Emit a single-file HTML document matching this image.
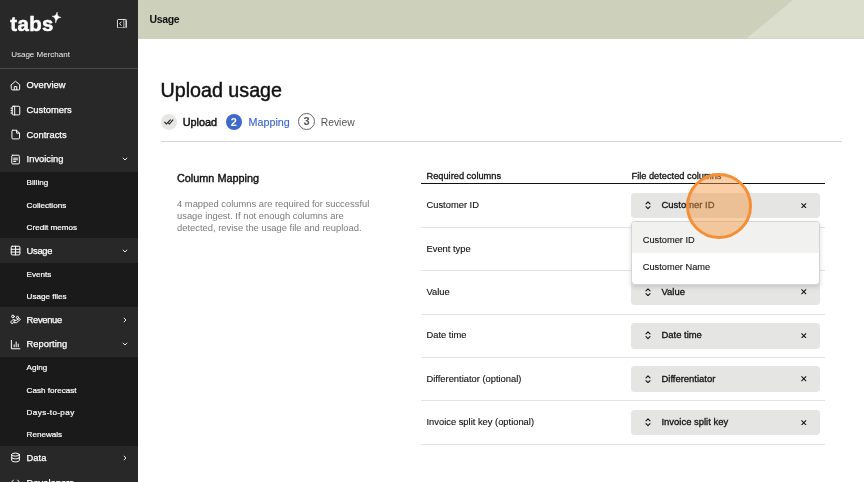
<!DOCTYPE html>
<html lang="en">
<head>
<meta charset="utf-8">
<title>Upload usage</title>
<style>
*{box-sizing:border-box;margin:0;padding:0}
body{will-change:transform}
html,body{width:864px;height:482px;overflow:hidden;background:#fff;font-family:"Liberation Sans",Arial,sans-serif;color:#111}
#side{position:absolute;left:0;top:0;width:138px;height:482px;background:#282828;color:#fff;overflow:hidden}
#logo{position:absolute;left:10.3px;top:11.9px;font-size:20.4px;font-weight:700;letter-spacing:0.35px;line-height:24px;-webkit-text-stroke:0.5px #fff}
#merchant{position:absolute;left:11.2px;top:49px;font-size:8px;line-height:12px;color:#eee}
#sdiv{position:absolute;left:0;top:68px;width:138px;height:1px;background:#4a4a4a}
#nav{position:absolute;left:0;top:73px;width:138px}
.it{height:24.69px;position:relative;background:#282828}
.it span{position:absolute;left:26.6px;top:0.2px;line-height:24.69px;font-size:9.35px;color:#fff;-webkit-text-stroke:0.25px #fff}
.it svg.ic{position:absolute;left:9.9px;top:6.9px;width:11px;height:11px}
.it svg.ch{position:absolute;left:121.5px;top:9.3px;width:6px;height:6px}
.sub{background:#1a1a1a}
.sub em{font-style:normal;position:relative;top:0.7px}
.sub div{height:22.2px;line-height:22.2px;padding-left:26.6px;font-size:8.1px;color:#fff;-webkit-text-stroke:0.2px #fff}
#top{position:absolute;left:138px;top:0;width:726px;height:38.5px;background:#cdd0bb;overflow:hidden}
#top b{position:absolute;left:11.6px;top:0.2px;line-height:38px;letter-spacing:-0.4px;font-size:10.5px;font-weight:700;color:#111}
#main{position:absolute;left:138px;top:38.5px;width:726px;height:444px;background:#fff}
h1{position:absolute;left:160.5px;top:76px;font-size:19.7px;font-weight:400;line-height:28px;color:#111;-webkit-text-stroke:0.45px #111;white-space:nowrap}
.step{position:absolute;top:113.6px;height:16.4px;white-space:nowrap}
.step i{position:absolute;left:0;top:0;width:16.4px;height:16.4px;border-radius:50%;font-style:normal;text-align:center;line-height:16.4px;font-size:11px;font-weight:700}
.step span{position:absolute;left:22px;top:0;line-height:16.4px;font-size:10.6px}
#hr1{position:absolute;left:161px;top:141.3px;width:681px;height:1px;background:#d4d4d4}
#cm{position:absolute;left:177px;top:170px;font-size:10.85px;line-height:16px;color:#111;-webkit-text-stroke:0.4px #111;white-space:nowrap}
#cp{position:absolute;left:177px;top:197.6px;font-size:9.4px;line-height:12.3px;color:#7a7a7a;white-space:nowrap}
.th{position:absolute;top:170.2px;line-height:12px;font-size:9.25px;color:#111;-webkit-text-stroke:0.3px #111;white-space:nowrap}
#thr{position:absolute;left:421.2px;top:183px;width:403.8px;height:1px;background:#111}
.rb{position:absolute;left:421.2px;width:403.8px;height:1px;background:#e3e3e3}
.rl{position:absolute;left:426.5px;margin-top:-0.2px;font-size:9.35px;line-height:14px;color:#111;-webkit-text-stroke:0.12px #111;white-space:nowrap}
.sel{position:absolute;left:631.3px;width:188.7px;height:25.8px;border-radius:3.7px;background:#e5e5e3}
.sel span{position:absolute;left:30.2px;top:-0.4px;line-height:25.8px;font-size:9.45px;color:#111;-webkit-text-stroke:0.3px #111;white-space:nowrap}
.sel svg.ud{position:absolute;left:13.3px;top:8.6px;width:6px;height:8.6px}
.sel svg.x{position:absolute;left:170.1px;top:10.1px;width:5.6px;height:5.6px}
#pop{position:absolute;left:631.4px;top:221.2px;width:188.2px;height:64px;background:#fff;border:1px solid #d4d4d4;border-radius:4px;box-shadow:0 2px 5px rgba(0,0,0,.14);overflow:hidden}
#pop div{height:31px;line-height:36.2px;padding-left:10.4px;font-size:9.25px;color:#111;-webkit-text-stroke:0.1px #111;white-space:nowrap}
#pop div.hl{background:#f1f1ef}
#pop div+div{line-height:29.4px;height:31px}
#circ{position:absolute;left:685.7px;top:172.6px;width:66px;height:66px;border-radius:50%;border:3.3px solid #f48f36;background:rgba(244,150,66,.47)}
</style>
</head>
<body>
<div id="side">
  <div id="logo">tabs</div>
  <svg style="position:absolute;left:52.4px;top:12px;width:9px;height:11px" viewBox="0 0 9 11"><g transform="rotate(8 4.5 4.8)"><path d="M4.5 0 Q4.7 4.6 9 4.8 Q4.9 5.2 4.5 11 Q4.1 5.2 0 4.8 Q4.3 4.6 4.5 0 Z" fill="#fff" stroke="#fff" stroke-width="0.5" stroke-linejoin="round"/></g></svg>
  <svg style="position:absolute;left:117.1px;top:18.8px;width:10px;height:9.4px" viewBox="0 0 10 9.4"><rect x="0.45" y="0.45" width="9.1" height="8.5" rx="1" fill="#1c1c1c" stroke="#fff" stroke-width="0.9"/><rect x="7.7" y="0.9" width="1.4" height="7.6" fill="#8c8c8c"/><path d="M6.7 0.5 V8.9" stroke="#fff" stroke-width="0.6"/><path d="M4.1 3 L2.7 4.7 L4.1 6.4" fill="none" stroke="#fff" stroke-width="0.9" stroke-linecap="round" stroke-linejoin="round"/></svg>
  <div id="merchant">Usage Merchant</div>
  <div id="sdiv"></div>
  <div id="nav">
    <div class="it"><svg class="ic" viewBox="0 0 16 16" fill="none" stroke="#fff" stroke-width="1.45" stroke-linejoin="round" stroke-linecap="round"><path d="M2 6.8 L8 1.8 L14 6.8 V13.2 a1.2 1.2 0 0 1 -1.2 1.2 H3.2 a1.2 1.2 0 0 1 -1.2 -1.2 Z"/><path d="M6.2 14.2 V9.6 H9.8 V14.2"/></svg><span>Overview</span></div>
    <div class="it"><svg class="ic" viewBox="0 0 16 16" fill="none" stroke="#fff" stroke-width="1.45" stroke-linejoin="round" stroke-linecap="round"><rect x="3.2" y="1.8" width="11" height="12.6" rx="1.4"/><path d="M6.8 1.8 V14.4 M1.4 4.6 H3.2 M1.4 8.1 H3.2 M1.4 11.6 H3.2"/></svg><span>Customers</span></div>
    <div class="it"><svg class="ic" viewBox="0 0 16 16" fill="none" stroke="#fff" stroke-width="1.45" stroke-linejoin="round" stroke-linecap="round"><path d="M4 1.8 H9.6 L13.8 6 V13 a1.4 1.4 0 0 1 -1.4 1.4 H4.2 a1.4 1.4 0 0 1 -1.4 -1.4 V3 a1.2 1.2 0 0 1 1.2 -1.2 Z"/><path d="M9.6 1.8 V6 H13.8"/></svg><span>Contracts</span></div>
    <div class="it"><svg class="ic" viewBox="0 0 16 16" fill="none" stroke="#fff" stroke-width="1.45" stroke-linejoin="round" stroke-linecap="round"><rect x="2.6" y="1.8" width="11" height="12.6" rx="1.4"/><path d="M5.2 6 H10.8 M5.2 8.4 H10.8 M5.2 10.8 H8.4"/></svg><span>Invoicing</span><svg class="ch" viewBox="0 0 6 6" fill="none" stroke="#fff" stroke-width="0.9"><path d="M0.8 1.8 L3 4 L5.2 1.8"/></svg></div>
    <div class="sub"><div><em>Billing</em></div><div><em>Collections</em></div><div><em>Credit memos</em></div></div>
    <div class="it"><svg class="ic" viewBox="0 0 16 16" fill="none" stroke="#fff" stroke-width="1.45" stroke-linejoin="round" stroke-linecap="round"><rect x="1.8" y="1.8" width="12.6" height="12.6" rx="1.4"/><path d="M1.8 6.2 H14.4 M1.8 10.3 H14.4 M8.1 1.8 V14.4"/></svg><span style="letter-spacing:-0.3px">Usage</span><svg class="ch" viewBox="0 0 6 6" fill="none" stroke="#fff" stroke-width="0.9"><path d="M0.8 1.8 L3 4 L5.2 1.8"/></svg></div>
    <div class="sub"><div><em>Events</em></div><div><em>Usage files</em></div></div>
    <div class="it"><svg class="ic" viewBox="0 0 16 16" fill="none" stroke="#fff" stroke-width="1.45" stroke-linejoin="round" stroke-linecap="round"><circle cx="4.3" cy="3.6" r="1.9"/><circle cx="10.8" cy="5" r="1.6"/><path d="M6.5 9.2 H9 L14 6.6 L15 8 L9.6 12.6 H4.6 L2.8 14.2 L0.8 11.6 L4 8.4 H6.5 a1 1 0 0 1 0 2.2 H5.5"/></svg><span style="letter-spacing:-0.3px">Revenue</span><svg class="ch" viewBox="0 0 6 6" fill="none" stroke="#fff" stroke-width="0.9"><path d="M1.8 0.8 L4 3 L1.8 5.2"/></svg></div>
    <div class="it"><svg class="ic" viewBox="0 0 16 16" fill="none" stroke="#fff" stroke-width="1.45" stroke-linejoin="round" stroke-linecap="round"><path d="M2 2 V14.2 H14.4 M6 11.4 V8.4 M9 11.4 V4.4 M12 11.4 V7.4"/></svg><span>Reporting</span><svg class="ch" viewBox="0 0 6 6" fill="none" stroke="#fff" stroke-width="0.9"><path d="M0.8 1.8 L3 4 L5.2 1.8"/></svg></div>
    <div class="sub"><div><em>Aging</em></div><div><em>Cash forecast</em></div><div><em style="letter-spacing:0.4px">Days-to-pay</em></div><div><em>Renewals</em></div></div>
    <div class="it"><svg class="ic" viewBox="0 0 16 16" fill="none" stroke="#fff" stroke-width="1.45" stroke-linejoin="round" stroke-linecap="round"><ellipse cx="8" cy="3.8" rx="5.6" ry="2.2"/><path d="M2.4 3.8 V12.2 C2.4 15 13.6 15 13.6 12.2 V3.8 M2.4 8 C2.4 10.8 13.6 10.8 13.6 8"/></svg><span>Data</span><svg class="ch" viewBox="0 0 6 6" fill="none" stroke="#fff" stroke-width="0.9"><path d="M1.8 0.8 L4 3 L1.8 5.2"/></svg></div>
    <div class="it"><svg class="ic" viewBox="0 0 16 16" fill="none" stroke="#fff" stroke-width="1.45" stroke-linejoin="round" stroke-linecap="round"><path d="M5 4.5 L1.8 8 L5 11.5 M11 4.5 L14.2 8 L11 11.5"/></svg><span style="top:1.2px">Developers</span></div>
  </div>
</div>
<div id="top">
  <svg style="position:absolute;left:0;top:0;width:726px;height:38.5px" viewBox="0 0 726 38.5"><path d="M655 0 H726 V38.5 H608.5 Z" fill="#dbdecd"/></svg>
  <b>Usage</b>
</div>
<div id="main"></div>
<h1>Upload usage</h1>
<div class="step" style="left:160.7px"><i style="background:#e6e6e4"><svg style="position:absolute;left:3.5px;top:5.4px;width:9.6px;height:5.8px" viewBox="0 0 9.6 5.8" fill="none" stroke="#222" stroke-width="1.1" stroke-linecap="round" stroke-linejoin="round"><path d="M0.7 3.2 L2.5 5 L6.4 0.8 M4.6 4.2 L5.4 5 L8.9 0.8"/></svg></i><span style="color:#111;-webkit-text-stroke:0.45px #111;font-size:10.85px">Upload</span></div>
<div class="step" style="left:225.5px"><i style="background:#3d68cc;color:#fff">2</i><span style="color:#3d68cc;left:23px;font-size:10.75px;-webkit-text-stroke:0.15px #3d68cc">Mapping</span></div>
<div class="step" style="left:298.1px"><i style="border:0.8px solid #666;color:#555;line-height:15.2px;width:16.8px;height:16.8px;top:-0.2px">3</i><span style="color:#555;left:22.6px;top:1.2px;font-size:10.35px">Review</span></div>
<div id="hr1"></div>
<div id="cm">Column Mapping</div>
<div id="cp">4 mapped columns are required for successful<br>usage ingest. If not enough columns are<br>detected, revise the usage file and reupload.</div>
<div class="th" style="left:426.5px">Required columns</div>
<div class="th" style="left:631.5px">File detected columns</div>
<div id="thr"></div>
<div class="rl" style="top:198.3px">Customer ID</div>
<div class="rl" style="top:241.7px">Event type</div>
<div class="rl" style="top:285.0px">Value</div>
<div class="rl" style="top:328.4px">Date time</div>
<div class="rl" style="top:371.8px">Differentiator (optional)</div>
<div class="rl" style="top:415.1px">Invoice split key (optional)</div>
<div class="rb" style="top:227px"></div>
<div class="rb" style="top:270px"></div>
<div class="rb" style="top:314px"></div>
<div class="rb" style="top:357px"></div>
<div class="rb" style="top:400px"></div>
<div class="rb" style="top:444px"></div>
<div class="sel" style="top:192.6px"><svg class="ud" viewBox="0 0 6 8.6" fill="none" stroke="#1a1a1a" stroke-width="1.15" stroke-linecap="round" stroke-linejoin="round"><path d="M1 2.9 L3 0.9 L5 2.9 M1 5.7 L3 7.7 L5 5.7"/></svg><span>Customer ID</span><svg class="x" viewBox="0 0 6 6" stroke="#111" stroke-width="1.1"><path d="M0.5 0.5 L5.5 5.5 M5.5 0.5 L0.5 5.5"/></svg></div>
<div class="sel" style="top:279.3px"><svg class="ud" viewBox="0 0 6 8.6" fill="none" stroke="#1a1a1a" stroke-width="1.15" stroke-linecap="round" stroke-linejoin="round"><path d="M1 2.9 L3 0.9 L5 2.9 M1 5.7 L3 7.7 L5 5.7"/></svg><span>Value</span><svg class="x" viewBox="0 0 6 6" stroke="#111" stroke-width="1.1"><path d="M0.5 0.5 L5.5 5.5 M5.5 0.5 L0.5 5.5"/></svg></div>
<div class="sel" style="top:322.8px"><svg class="ud" viewBox="0 0 6 8.6" fill="none" stroke="#1a1a1a" stroke-width="1.15" stroke-linecap="round" stroke-linejoin="round"><path d="M1 2.9 L3 0.9 L5 2.9 M1 5.7 L3 7.7 L5 5.7"/></svg><span>Date time</span><svg class="x" viewBox="0 0 6 6" stroke="#111" stroke-width="1.1"><path d="M0.5 0.5 L5.5 5.5 M5.5 0.5 L0.5 5.5"/></svg></div>
<div class="sel" style="top:366.2px"><svg class="ud" viewBox="0 0 6 8.6" fill="none" stroke="#1a1a1a" stroke-width="1.15" stroke-linecap="round" stroke-linejoin="round"><path d="M1 2.9 L3 0.9 L5 2.9 M1 5.7 L3 7.7 L5 5.7"/></svg><span>Differentiator</span><svg class="x" viewBox="0 0 6 6" stroke="#111" stroke-width="1.1"><path d="M0.5 0.5 L5.5 5.5 M5.5 0.5 L0.5 5.5"/></svg></div>
<div class="sel" style="top:409.5px"><svg class="ud" viewBox="0 0 6 8.6" fill="none" stroke="#1a1a1a" stroke-width="1.15" stroke-linecap="round" stroke-linejoin="round"><path d="M1 2.9 L3 0.9 L5 2.9 M1 5.7 L3 7.7 L5 5.7"/></svg><span>Invoice split key</span><svg class="x" viewBox="0 0 6 6" stroke="#111" stroke-width="1.1"><path d="M0.5 0.5 L5.5 5.5 M5.5 0.5 L0.5 5.5"/></svg></div>
<div id="pop"><div class="hl">Customer ID</div><div>Customer Name</div></div>
<div id="circ"></div>
</body>
</html>
